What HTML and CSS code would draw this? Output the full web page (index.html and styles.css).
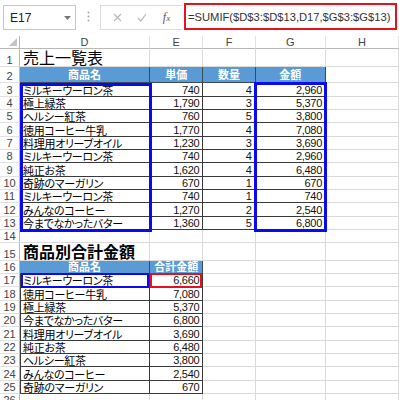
FILE: index.html
```html
<!DOCTYPE html>
<html lang="ja">
<head>
<meta charset="utf-8">
<link rel="stylesheet" href="styles.css">
</head>
<body>
<div class="bar">
  <div class="namebox"><span>E17</span><svg class="dd" width="7" height="4" viewBox="0 0 7 4"><path d="M0 0H7L3.5 4Z" fill="#777"/></svg></div>
  <div class="dots"><svg width="3" height="11" viewBox="0 0 3 11"><circle cx="1.5" cy="1.5" r="1" fill="#aaa"/><circle cx="1.5" cy="5.5" r="1" fill="#aaa"/><circle cx="1.5" cy="9.5" r="1" fill="#aaa"/></svg></div>
  <div class="fx">
    <svg width="9" height="9" viewBox="0 0 9 9"><path d="M1 1L8 8M8 1L1 8" stroke="#b8b8b8" stroke-width="1.2"/></svg>
    <svg width="10" height="9" viewBox="0 0 10 9"><path d="M1 5L3.8 8L9 1" stroke="#b8b8b8" stroke-width="1.2" fill="none"/></svg>
    <span class="fxt"><i>f</i><span class="x">x</span></span>
  </div>
  <div class="formula">=SUMIF($D$3:$D$13,D17,$G$3:$G$13)</div>
</div>
<div class="sheet">
  <div class="cells">
    <div class="r ch"><div class="c corner"><svg width="8" height="8" viewBox="0 0 8 8"><path d="M8 0V8H0Z" fill="#c4c4c4"/></svg></div><div class="c">D</div><div class="c">E</div><div class="c">F</div><div class="c">G</div><div class="c">H</div></div>
    <div class="r"><div class="c rh">1</div><div class="c ttl">売上一覧表</div><div class="c"></div><div class="c"></div><div class="c"></div><div class="c"></div></div>
    <div class="r"><div class="c rh">2</div><div class="c hd">商品名</div><div class="c hd">単価</div><div class="c hd">数量</div><div class="c hd">金額</div><div class="c"></div></div>
    <div class="r"><div class="c rh">3</div><div class="c jp t tl">ミルキーウーロン茶</div><div class="c n t">740</div><div class="c n t">4</div><div class="c n t">2,960</div><div class="c"></div></div>
    <div class="r"><div class="c rh">4</div><div class="c jp t tl">極上緑茶</div><div class="c n t">1,790</div><div class="c n t">3</div><div class="c n t">5,370</div><div class="c"></div></div>
    <div class="r"><div class="c rh">5</div><div class="c jp t tl">ヘルシー紅茶</div><div class="c n t">760</div><div class="c n t">5</div><div class="c n t">3,800</div><div class="c"></div></div>
    <div class="r"><div class="c rh">6</div><div class="c jp t tl">徳用コーヒー牛乳</div><div class="c n t">1,770</div><div class="c n t">4</div><div class="c n t">7,080</div><div class="c"></div></div>
    <div class="r"><div class="c rh">7</div><div class="c jp t tl">料理用オリーブオイル</div><div class="c n t">1,230</div><div class="c n t">3</div><div class="c n t">3,690</div><div class="c"></div></div>
    <div class="r"><div class="c rh">8</div><div class="c jp t tl">ミルキーウーロン茶</div><div class="c n t">740</div><div class="c n t">4</div><div class="c n t">2,960</div><div class="c"></div></div>
    <div class="r"><div class="c rh">9</div><div class="c jp t tl">純正お茶</div><div class="c n t">1,620</div><div class="c n t">4</div><div class="c n t">6,480</div><div class="c"></div></div>
    <div class="r"><div class="c rh">10</div><div class="c jp t tl">奇跡のマーガリン</div><div class="c n t">670</div><div class="c n t">1</div><div class="c n t">670</div><div class="c"></div></div>
    <div class="r"><div class="c rh">11</div><div class="c jp t tl">ミルキーウーロン茶</div><div class="c n t">740</div><div class="c n t">1</div><div class="c n t">740</div><div class="c"></div></div>
    <div class="r"><div class="c rh">12</div><div class="c jp t tl">みんなのコーヒー</div><div class="c n t">1,270</div><div class="c n t">2</div><div class="c n t">2,540</div><div class="c"></div></div>
    <div class="r"><div class="c rh">13</div><div class="c jp t tl">今までなかったバター</div><div class="c n t">1,360</div><div class="c n t">5</div><div class="c n t">6,800</div><div class="c"></div></div>
    <div class="r"><div class="c rh">14</div><div class="c"></div><div class="c"></div><div class="c"></div><div class="c"></div><div class="c"></div></div>
    <div class="r"><div class="c rh">15</div><div class="c ttl b">商品別合計金額</div><div class="c"></div><div class="c"></div><div class="c"></div><div class="c"></div></div>
    <div class="r"><div class="c rh">16</div><div class="c hd">商品名</div><div class="c hd">合計金額</div><div class="c"></div><div class="c"></div><div class="c"></div></div>
    <div class="r"><div class="c rh">17</div><div class="c jp t tl">ミルキーウーロン茶</div><div class="c n t">6,660</div><div class="c"></div><div class="c"></div><div class="c"></div></div>
    <div class="r"><div class="c rh">18</div><div class="c jp t tl">徳用コーヒー牛乳</div><div class="c n t">7,080</div><div class="c"></div><div class="c"></div><div class="c"></div></div>
    <div class="r"><div class="c rh">19</div><div class="c jp t tl">極上緑茶</div><div class="c n t">5,370</div><div class="c"></div><div class="c"></div><div class="c"></div></div>
    <div class="r"><div class="c rh">20</div><div class="c jp t tl">今までなかったバター</div><div class="c n t">6,800</div><div class="c"></div><div class="c"></div><div class="c"></div></div>
    <div class="r"><div class="c rh">21</div><div class="c jp t tl">料理用オリーブオイル</div><div class="c n t">3,690</div><div class="c"></div><div class="c"></div><div class="c"></div></div>
    <div class="r"><div class="c rh">22</div><div class="c jp t tl">純正お茶</div><div class="c n t">6,480</div><div class="c"></div><div class="c"></div><div class="c"></div></div>
    <div class="r"><div class="c rh">23</div><div class="c jp t tl">ヘルシー紅茶</div><div class="c n t">3,800</div><div class="c"></div><div class="c"></div><div class="c"></div></div>
    <div class="r"><div class="c rh">24</div><div class="c jp t tl">みんなのコーヒー</div><div class="c n t">2,540</div><div class="c"></div><div class="c"></div><div class="c"></div></div>
    <div class="r"><div class="c rh">25</div><div class="c jp t tl">奇跡のマーガリン</div><div class="c n t">670</div><div class="c"></div><div class="c"></div><div class="c"></div></div>
    <div class="r"><div class="c rh">26</div><div class="c"></div><div class="c"></div><div class="c"></div><div class="c"></div><div class="c"></div></div>
  </div>
  <div class="marks">
    <div class="box list"></div>
    <div class="box sums"></div>
    <div class="box key"></div>
    <div class="box res"></div>
  </div>
</div>
</body>
</html>
```
FILE: styles.css
```css
* { box-sizing: border-box; }
body {
  margin: 0;
  width: 399px;
  height: 400px;
  overflow: hidden;
  background: #fff;
  color: #000;
  font-family: "Liberation Sans", "Noto Sans CJK JP", sans-serif;
}
.bar {
  height: 36px;
  display: flex;
  align-items: flex-start;
  padding-top: 3px;
}
.namebox {
  margin: 2px 0 0 3px;
  width: 73px;
  height: 25px;
  border: 1px solid #c8c8c8;
  display: flex;
  align-items: center;
  justify-content: space-between;
  padding: 0 4px 0 6px;
  font-size: 12px;
  color: #222;
}
.dots {
  width: 24px;
  height: 27px;
  display: flex;
  align-items: center;
  justify-content: center;
}
.fx {
  margin-top: 2px;
  width: 82px;
  height: 25px;
  border: 1px solid #dcdcdc;
  border-right: none;
  display: flex;
  align-items: center;
  justify-content: space-around;
  padding: 0 4px;
}
.fxt {
  font-family: "Liberation Serif", serif;
  font-size: 12px;
  color: #555;
}
.fxt .x { font-size: 9px; font-style: italic; }
.formula {
  margin-left: 2px;
  width: 213px;
  height: 27px;
  border: 2px solid #e8101c;
  display: flex;
  align-items: center;
  padding-left: 2px;
  font-size: 11.2px;
  color: #333;
  white-space: nowrap;
  overflow: hidden;
}
.sheet { display: grid; }
.cells, .marks {
  grid-area: 1 / 1;
  display: grid;
  grid-template-columns: 20px 130px 53.33px 52.33px 70.34px 1fr;
  grid-template-rows: 13.33px 17.33px 16.67px repeat(12, 13.333px) 17.34px repeat(10, 13.333px) 13.33px;
}
.marks { pointer-events: none; }
.r { display: contents; }
.c {
  min-width: 0;
  border-right: 1px solid #dadada;
  border-bottom: 1px solid #dadada;
  font-size: 11px;
  line-height: 12px;
  white-space: nowrap;
  display: flex;
  align-items: flex-end;
  padding: 0 2px;
}
.ch .c {
  justify-content: center;
  align-items: center;
  color: #444;
  border-bottom-color: #b8b8b8;
  border-right-color: #e2e2e2;
}
.ch .corner {
  justify-content: flex-end;
  align-items: flex-end;
  padding: 0 2px 2px 0;
  border-right-color: #b8b8b8;
}
.rh {
  justify-content: center;
  padding: 0;
  color: #444;
  border-right-color: #b8b8b8;
  border-bottom-color: #e2e2e2;
}
.ttl {
  font-family: "Noto Sans CJK JP", sans-serif;
  font-size: 16px;
  line-height: 16px;
  padding-left: 3px;
  align-items: center;
}
.ttl.b { font-weight: bold; }
.hd {
  background: #5b9bd5;
  color: #fff;
  font-family: "Noto Sans CJK JP", sans-serif;
  font-weight: bold;
  line-height: 11px;
  justify-content: center;
  align-items: center;
  border-right-color: #3c4a58;
  border-bottom-color: #3c4a58;
}
.jp {
  font-family: "Noto Sans CJK JP", sans-serif;
  font-feature-settings: "palt";
  letter-spacing: -0.3px;
  line-height: 11px;
  padding-left: 3px;
}
.n {
  justify-content: flex-end;
  padding-right: 3px;
  letter-spacing: -0.3px;
  color: #111;
}
.t {
  border-right-color: #3a3a3a;
  border-bottom-color: #3a3a3a;
}
.tl { box-shadow: inset 1px 0 #3a3a3a; }
.box { border: 3px solid #0a0af0; }
.list { grid-column: 2; grid-row: 4 / 15; margin: 0 -2px -2px 0; }
.sums { grid-column: 5; grid-row: 4 / 15; margin: -1px -1px -2px -2px; }
.key { grid-column: 2; grid-row: 18; border-width: 2px; margin: -1px 1px -1px 1px; }
.res { grid-column: 3; grid-row: 18; border: 2px solid #e8101c; margin: -1px 1px -1px 0; }
```
